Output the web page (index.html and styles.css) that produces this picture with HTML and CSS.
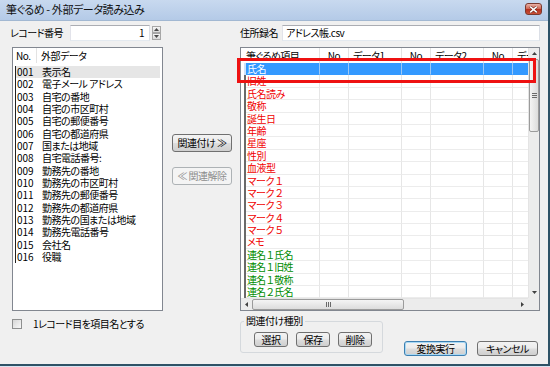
FILE: index.html
```html
<!DOCTYPE html>
<html lang="ja">
<head>
<meta charset="utf-8">
<title>筆ぐるめ - 外部データ読み込み</title>
<link rel="stylesheet" href="styles.css">
</head>
<body>
<div class="window">
  <div class="titlebar">
    <span class="title">筆ぐるめ - 外部データ読み込み</span>
    <span class="close"><svg width="9" height="7" viewBox="0 0 9 7"><path d="M1.2 0.6 L7.8 6.4 M7.8 0.6 L1.2 6.4" stroke="#5a1d16" stroke-width="2.6"/><path d="M1.2 0.6 L7.8 6.4 M7.8 0.6 L1.2 6.4" stroke="#fff" stroke-width="1.5"/></svg></span>
  </div>
  <div class="content">
    <div class="toprow">
      <div class="field rec">
        <span class="lbl">レコード番号</span>
        <span class="input num">1</span>
        <span class="spin">
          <span class="sb"><svg width="5" height="3" viewBox="0 0 5 3"><path d="M0 3 L2.5 0 L5 3Z" fill="#4a4a4a"/></svg></span>
          <span class="sb"><svg width="5" height="3" viewBox="0 0 5 3"><path d="M0 0 L2.5 3 L5 0Z" fill="#4a4a4a"/></svg></span>
        </span>
      </div>
      <div class="field addr">
        <span class="lbl">住所録名</span>
        <span class="input txt">アドレス帳.csv</span>
      </div>
    </div>

    <div class="mainrow">
      <div class="list llist">
        <div class="lhead"><span class="c1">No.</span><span class="c2">外部データ</span></div>
        <div class="lrows">
          <div class="lrow sel"><span class="c1">001</span><span class="c2">表示名</span></div>
          <div class="lrow"><span class="c1">002</span><span class="c2">電子メール アドレス</span></div>
          <div class="lrow"><span class="c1">003</span><span class="c2">自宅の番地</span></div>
          <div class="lrow"><span class="c1">004</span><span class="c2">自宅の市区町村</span></div>
          <div class="lrow"><span class="c1">005</span><span class="c2">自宅の郵便番号</span></div>
          <div class="lrow"><span class="c1">006</span><span class="c2">自宅の都道府県</span></div>
          <div class="lrow"><span class="c1">007</span><span class="c2">国または地域</span></div>
          <div class="lrow"><span class="c1">008</span><span class="c2">自宅電話番号:</span></div>
          <div class="lrow"><span class="c1">009</span><span class="c2">勤務先の番地</span></div>
          <div class="lrow"><span class="c1">010</span><span class="c2">勤務先の市区町村</span></div>
          <div class="lrow"><span class="c1">011</span><span class="c2">勤務先の郵便番号</span></div>
          <div class="lrow"><span class="c1">012</span><span class="c2">勤務先の都道府県</span></div>
          <div class="lrow"><span class="c1">013</span><span class="c2">勤務先の国または地域</span></div>
          <div class="lrow"><span class="c1">014</span><span class="c2">勤務先電話番号</span></div>
          <div class="lrow"><span class="c1">015</span><span class="c2">会社名</span></div>
          <div class="lrow"><span class="c1">016</span><span class="c2">役職</span></div>
        </div>
      </div>

      <div class="mid">
        <button class="btn wide">関連付け ≫</button>
        <button class="btn wide" disabled>≪ 関連解除</button>
      </div>

      <div class="list rlist">
        <div class="rview">
          <div class="rhead">
            <span class="h item">筆ぐるめ項目</span><span class="h no">No</span><span class="h dat">データ1</span><span class="h no">No</span><span class="h dat">データ2</span><span class="h no">No</span><span class="h dat">データ3</span>
          </div>
          <div class="rrow sel"><span class="item">氏名</span><span class="no"></span><span class="dat"></span><span class="no"></span><span class="dat"></span><span class="no"></span><span class="dat"></span></div>
          <div class="rrow red"><span class="item">旧姓</span><span class="no"></span><span class="dat"></span><span class="no"></span><span class="dat"></span><span class="no"></span><span class="dat"></span></div>
          <div class="rrow red"><span class="item">氏名読み</span><span class="no"></span><span class="dat"></span><span class="no"></span><span class="dat"></span><span class="no"></span><span class="dat"></span></div>
          <div class="rrow red"><span class="item">敬称</span><span class="no"></span><span class="dat"></span><span class="no"></span><span class="dat"></span><span class="no"></span><span class="dat"></span></div>
          <div class="rrow red"><span class="item">誕生日</span><span class="no"></span><span class="dat"></span><span class="no"></span><span class="dat"></span><span class="no"></span><span class="dat"></span></div>
          <div class="rrow red"><span class="item">年齢</span><span class="no"></span><span class="dat"></span><span class="no"></span><span class="dat"></span><span class="no"></span><span class="dat"></span></div>
          <div class="rrow red"><span class="item">星座</span><span class="no"></span><span class="dat"></span><span class="no"></span><span class="dat"></span><span class="no"></span><span class="dat"></span></div>
          <div class="rrow red"><span class="item">性別</span><span class="no"></span><span class="dat"></span><span class="no"></span><span class="dat"></span><span class="no"></span><span class="dat"></span></div>
          <div class="rrow red"><span class="item">血液型</span><span class="no"></span><span class="dat"></span><span class="no"></span><span class="dat"></span><span class="no"></span><span class="dat"></span></div>
          <div class="rrow red"><span class="item fw">マーク１</span><span class="no"></span><span class="dat"></span><span class="no"></span><span class="dat"></span><span class="no"></span><span class="dat"></span></div>
          <div class="rrow red"><span class="item fw">マーク２</span><span class="no"></span><span class="dat"></span><span class="no"></span><span class="dat"></span><span class="no"></span><span class="dat"></span></div>
          <div class="rrow red"><span class="item fw">マーク３</span><span class="no"></span><span class="dat"></span><span class="no"></span><span class="dat"></span><span class="no"></span><span class="dat"></span></div>
          <div class="rrow red"><span class="item fw">マーク４</span><span class="no"></span><span class="dat"></span><span class="no"></span><span class="dat"></span><span class="no"></span><span class="dat"></span></div>
          <div class="rrow red"><span class="item fw">マーク５</span><span class="no"></span><span class="dat"></span><span class="no"></span><span class="dat"></span><span class="no"></span><span class="dat"></span></div>
          <div class="rrow red"><span class="item">メモ</span><span class="no"></span><span class="dat"></span><span class="no"></span><span class="dat"></span><span class="no"></span><span class="dat"></span></div>
          <div class="rrow grn"><span class="item fw">連名１氏名</span><span class="no"></span><span class="dat"></span><span class="no"></span><span class="dat"></span><span class="no"></span><span class="dat"></span></div>
          <div class="rrow grn"><span class="item fw">連名１旧姓</span><span class="no"></span><span class="dat"></span><span class="no"></span><span class="dat"></span><span class="no"></span><span class="dat"></span></div>
          <div class="rrow grn"><span class="item fw">連名１敬称</span><span class="no"></span><span class="dat"></span><span class="no"></span><span class="dat"></span><span class="no"></span><span class="dat"></span></div>
          <div class="rrow grn"><span class="item fw">連名２氏名</span><span class="no"></span><span class="dat"></span><span class="no"></span><span class="dat"></span><span class="no"></span><span class="dat"></span></div>
        </div>
        <div class="vscroll">
          <span class="arrow"><svg width="5" height="3" viewBox="0 0 5 3"><path d="M0 3 L2.5 0 L5 3Z" fill="#404040"/></svg></span>
          <span class="vthumb"><svg width="5" height="5" viewBox="0 0 5 5"><path d="M0 0.5H5M0 2.5H5M0 4.5H5" stroke="#6a6a6a" stroke-width="1"/></svg></span>
          <span class="track"></span>
          <span class="arrow"><svg width="5" height="3" viewBox="0 0 5 3"><path d="M0 0 L2.5 3 L5 0Z" fill="#404040"/></svg></span>
        </div>
        <div class="hscroll">
          <span class="arrow"><svg width="3" height="5" viewBox="0 0 3 5"><path d="M3 0 L0 2.5 L3 5Z" fill="#404040"/></svg></span>
          <span class="hthumb"><svg width="5" height="5" viewBox="0 0 5 5"><path d="M0.5 0V5M2.5 0V5M4.5 0V5" stroke="#6a6a6a" stroke-width="1"/></svg></span>
          <span class="track"></span>
          <span class="arrow"><svg width="3" height="5" viewBox="0 0 3 5"><path d="M0 0 L3 2.5 L0 5Z" fill="#404040"/></svg></span>
        </div>
        <div class="corner"></div>
        <div class="mark"></div>
      </div>
    </div>

    <div class="botrow">
      <div class="chk"><span class="box"></span><span>1レコード目を項目名とする</span></div>
      <div class="bright">
        <fieldset class="grp">
          <legend>関連付け種別</legend>
          <div class="grpbtns">
            <button class="btn sm">選択</button>
            <button class="btn sm">保存</button>
            <button class="btn sm">削除</button>
          </div>
        </fieldset>
        <div class="actions">
          <button class="btn def">変換実行</button>
          <button class="btn cancel">キャンセル</button>
        </div>
      </div>
    </div>
  </div>
</div>
</body>
</html>
```

FILE: styles.css
```css
* { box-sizing: border-box; margin: 0; padding: 0; }
html, body { width: 550px; height: 367px; overflow: hidden; }
body {
  background: #d8e4f2;
  font-family: "Noto Sans CJK JP", "Noto Sans", sans-serif;
  font-size: 10px;
  font-feature-settings: "palt";
  letter-spacing: -0.5px;
  line-height: 12px;
  color: #000;
}

.window {
  width: 550px;
  height: 366px;
  display: flex;
  flex-direction: column;
  background: #f0f0f0;
  border-right: 2px solid #2e5266;
  border-bottom: 2px solid #2e5266;
}

/* title bar */
.titlebar {
  height: 21px;
  flex: none;
  display: flex;
  align-items: center;
  justify-content: space-between;
  padding: 0 6px 2px 6px;
  background: linear-gradient(#c8d9ef, #b4cae7);
  border-bottom: 1px solid #a2b8d2;
}
.title { font-size: 11px; color: #111; letter-spacing: -0.4px; }
.close {
  width: 17px;
  height: 12px;
  border: 1px solid #7a3a30;
  border-radius: 3px;
  background: linear-gradient(#e9b3a8, #d06a58 45%, #b8321f 55%, #c85038);
  display: flex;
  align-items: center;
  justify-content: center;
}

.content {
  flex: 1;
  display: flex;
  flex-direction: column;
  padding: 4px 0 0 10px;
}

.toprow, .mainrow, .botrow {
  display: grid;
  grid-template-columns: 153px 77px 300px;
}

/* top fields */
.toprow { height: 16px; }
.field { display: flex; align-items: center; height: 16px; }
.rec .lbl { width: 60px; }
.addr { grid-column: 3; }
.addr .lbl { width: 42px; }
.input {
  height: 16px;
  background: #fff;
  border: 1px solid #abadb3;
  border-color: #abadb3 #dbdfe6 #e3e9ef #e2e3ea;
  display: flex;
  align-items: center;
}
.num { width: 80px; justify-content: flex-end; padding-right: 5px; }
.txt { width: 258px; padding-left: 3px; }
.spin { width: 9px; height: 14px; margin-left: 2px; display: flex; flex-direction: column; }
.sb {
  flex: 1;
  border: 1px solid #a7a7a7;
  background: linear-gradient(#f6f6f6, #dadada);
  display: flex;
  align-items: center;
  justify-content: center;
}

/* main row */
.mainrow { margin-top: 6px; height: 261px; }
.list { background: #fff; border: 1px solid #828790; }

.llist { margin-left: 2px; display: flex; flex-direction: column; overflow: hidden; }
.lhead { display: flex; height: 15px; flex: none; }
.lhead .c1 { width: 24px; padding-left: 3px; border-right: 1px solid #e3e3e3; display: flex; align-items: center; }
.lhead .c2 { padding-left: 4px; display: flex; align-items: center; }
.lrows { padding-top: 3px; }
.lrow {
  display: flex;
  height: 12.33px;
  line-height: 12.33px;
  margin: 0 2px 0 2px;
  border-left: 1px solid #222;
}
.lrow.sel { background: #e6e6e6; }
.lrow .c1 { width: 21px; padding-left: 1px; letter-spacing: 0; }
.lrow .c2 { padding-left: 5px; white-space: nowrap; }

.mid { display: flex; flex-direction: column; padding: 87px 0 0 9px; gap: 15px; }

.btn {
  font: inherit;
  font-feature-settings: "palt";
  letter-spacing: -0.5px;
  line-height: 12px;
  color: #000;
  border: 1px solid #707070;
  border-radius: 3px;
  background: linear-gradient(#f3f3f3 0%, #ebebeb 48%, #dddddd 52%, #cfcfcf 100%);
  display: flex;
  align-items: center;
  justify-content: center;
  white-space: nowrap;
}
.btn:disabled { border-color: #adb2b5; background: #f4f4f4; color: #8d8d8d; }
.btn.wide { width: 60px; height: 18px; }
.btn.sm { width: 34px; height: 15px; }
.btn.def { width: 63px; height: 15px; border-color: #3c7fb1; box-shadow: inset 0 0 0 1px #a8d8f4; }
.btn.cancel { width: 61px; height: 15px; }

/* right list */
.rlist {
  position: relative;
  display: grid;
  grid-template-columns: 1fr 11px;
  grid-template-rows: 1fr 12px;
}
.rview { overflow: hidden; }
.rhead { display: flex; height: 15px; width: max-content; }
.rhead .h {
  flex: none;
  height: 15px;
  border-right: 1px solid #e3e3e3;
  display: flex;
  align-items: center;
  padding-left: 4px;
  white-space: nowrap;
}
.rhead .item { width: 79px; padding-left: 5px; }
.rhead .no { width: 29px; justify-content: center; padding-left: 0; }
.rhead .dat { width: 53px; }

.rrow {
  display: flex;
  width: max-content;
  height: 12.4px;
  line-height: 11.4px;
  margin-left: 3px;
  border-left: 2px solid #6a6a6a;
}
.rrow span {
  flex: none;
  height: 12.4px;
  border-right: 1px solid #e6e6e6;
  border-bottom: 1px solid #ececec;
  white-space: nowrap;
}
.rrow .item { width: 74px; padding-left: 1px; }
.rrow .item.fw { font-feature-settings: normal; letter-spacing: -0.9px; }
.rrow .no { width: 29px; }
.rrow .dat { width: 53px; }
.rrow.red { color: #f00000; }
.rrow.grn { color: #008c00; }
.rrow.sel { background: #3399ff; color: #fff; border-left-color: #cfe3f8; }
.rrow.sel span { border-right-color: #9cc8f6; border-bottom-color: #3399ff; }

.vscroll {
  grid-column: 2;
  grid-row: 1;
  display: flex;
  flex-direction: column;
  background: #ececec;
  border-left: 1px solid #e4e4e4;
}
.vscroll .arrow { height: 11px; flex: none; display: flex; align-items: center; justify-content: center; }
.vthumb {
  height: 73px;
  flex: none;
  border: 1px solid #9b9b9b;
  border-radius: 2px;
  background: linear-gradient(90deg, #f4f4f4, #dcdcdc);
  display: flex;
  align-items: center;
  justify-content: center;
}
.track { flex: 1; }
.hscroll {
  grid-column: 1;
  grid-row: 2;
  display: flex;
  background: #ececec;
  border-top: 1px solid #e4e4e4;
}
.hscroll .arrow { width: 11px; flex: none; display: flex; align-items: center; justify-content: center; }
.hthumb {
  width: 152px;
  flex: none;
  border: 1px solid #9b9b9b;
  border-radius: 2px;
  background: linear-gradient(#f4f4f4, #dcdcdc);
  display: flex;
  align-items: center;
  justify-content: center;
}
.corner { grid-column: 2; grid-row: 2; background: #ececec; }

.mark {
  position: absolute;
  left: -4px;
  top: 10px;
  width: 299px;
  height: 25px;
  border: 3px solid #ee1111;
}

/* bottom row */
.botrow { flex: 1; }
.chk {
  grid-column: 1;
  align-self: start;
  display: flex;
  align-items: center;
  padding: 10px 0 0 2px;
  white-space: nowrap;
}
.box {
  width: 10px;
  height: 10px;
  flex: none;
  border: 1px solid #8e8f8f;
  background: linear-gradient(135deg, #d6d6d6, #f8f8f8);
  margin-right: 11px;
}
.bright {
  grid-column: 3;
  display: flex;
  align-items: flex-start;
  padding-top: 7px;
}
.grp {
  width: 143px;
  height: 38px;
  border: 1px solid #d5d9dd;
  border-radius: 3px;
  padding: 0;
  margin: 0;
  flex: none;
}
.grp legend {
  margin-left: 3px;
  padding: 0 2px;
  line-height: 12px;
}
.grpbtns { display: flex; gap: 8px; padding: 5px 0 0 13px; }
.actions { display: flex; gap: 10px; margin: 26px 0 0 21px; }
```
